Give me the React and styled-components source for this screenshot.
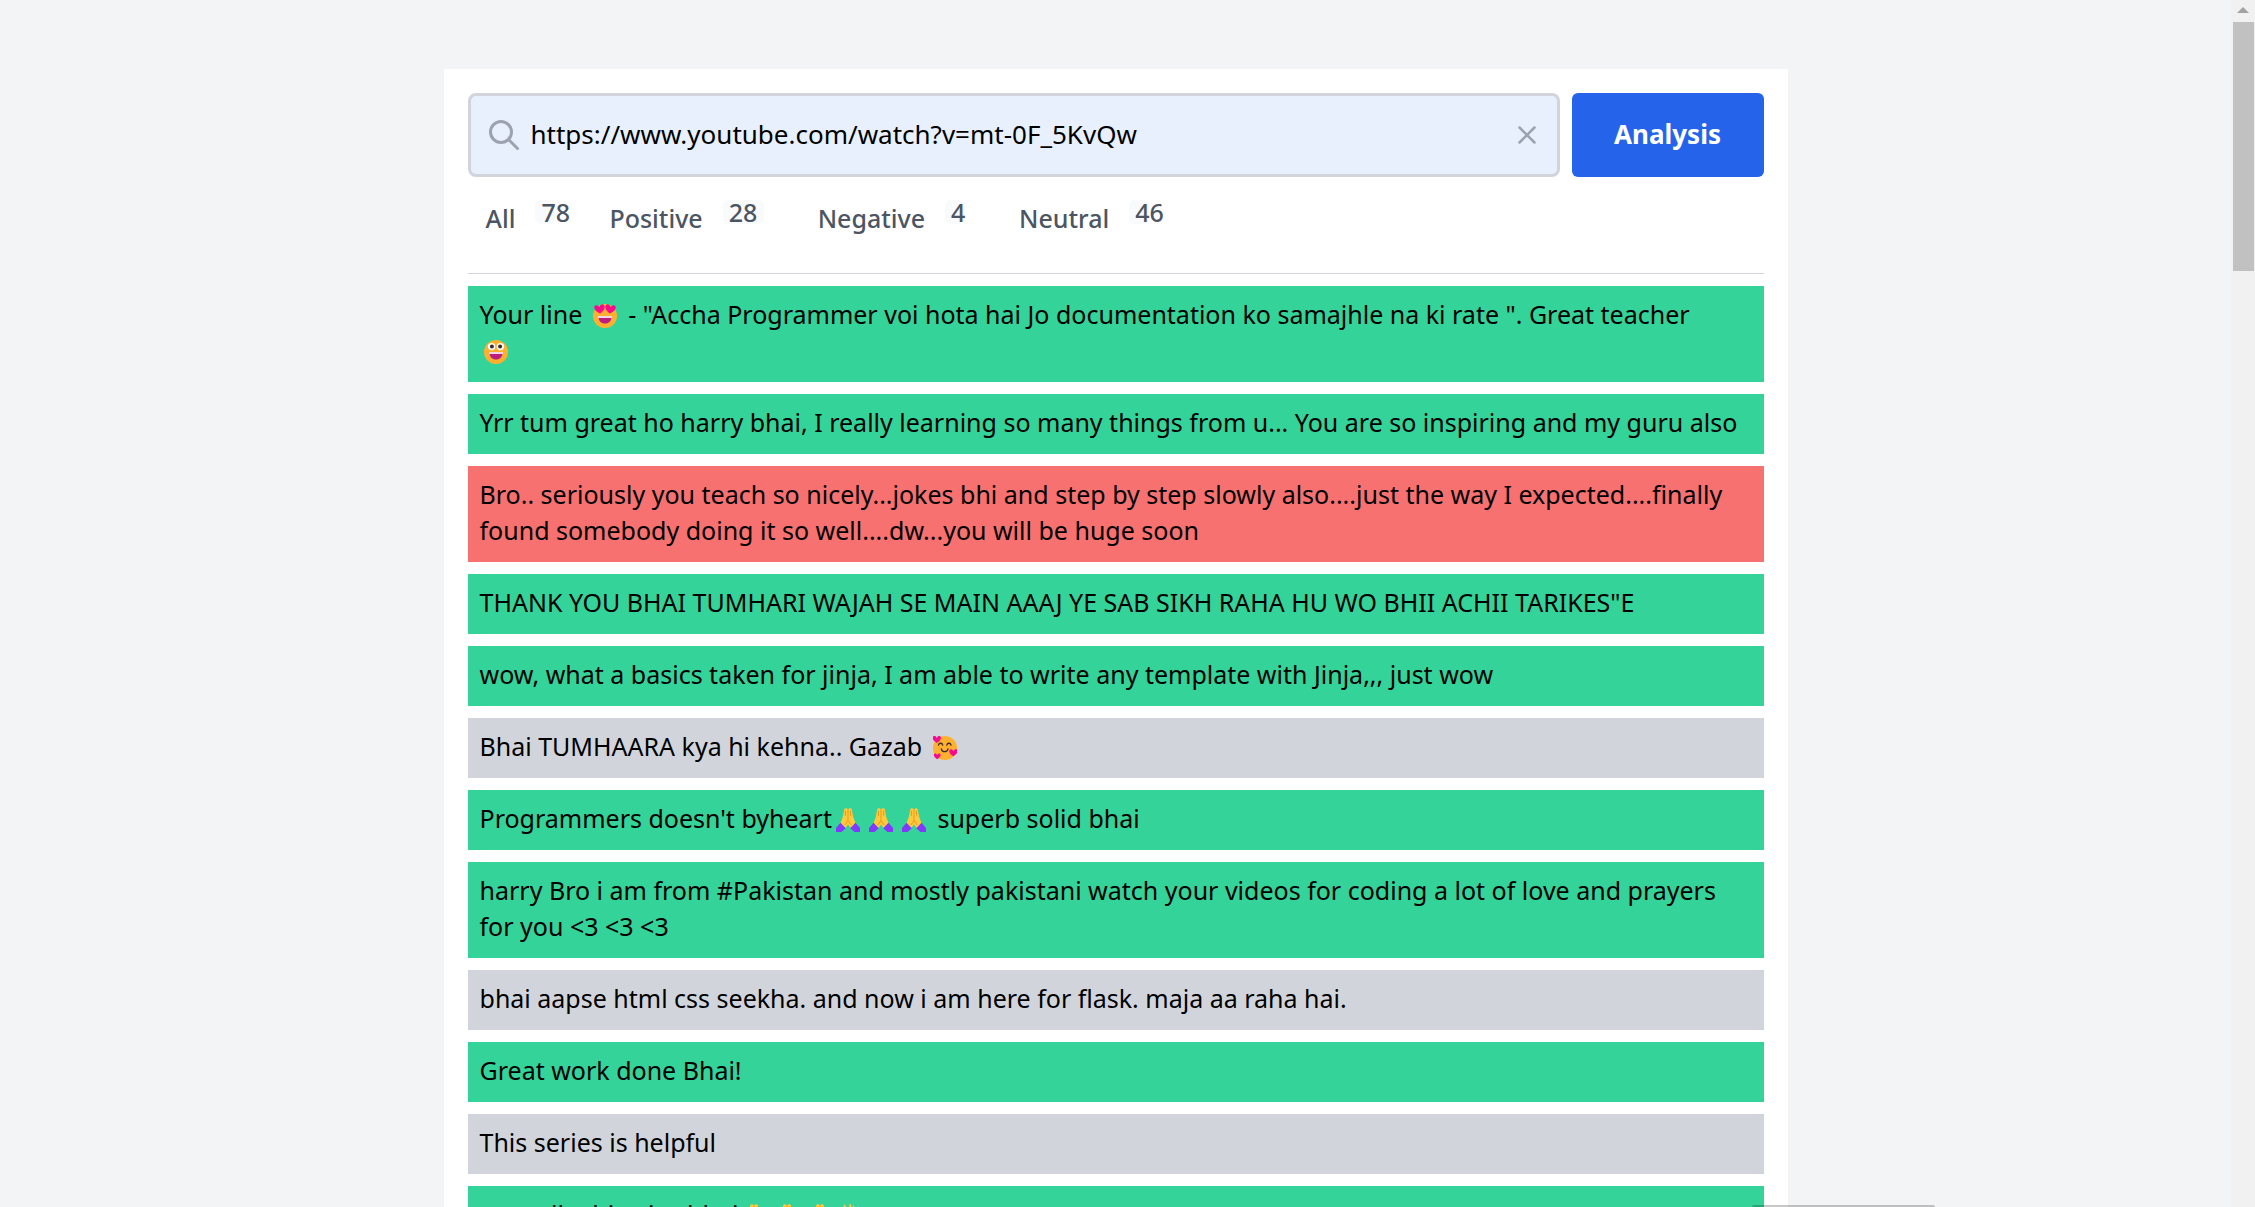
import React, { useState } from "react";
import styled, { createGlobalStyle } from "styled-components";

const GlobalStyle = createGlobalStyle`
  *, *::before, *::after { box-sizing: border-box; }
  body {
    margin: 0;
    background: #f3f4f6;
    color: #000;
    font-family: "Noto Sans", "Open Sans", sans-serif;
  }
`;

const Window = styled.div`
  display: flex;
  height: 100vh;
  overflow: hidden;
`;

const Page = styled.main`
  flex: 1;
  min-width: 0;
  height: 100%;
  padding-top: 69px;
  overflow: hidden;
`;

const Panel = styled.section`
  width: 100%;
  max-width: 1344px;
  margin: 0 auto;
  padding: 24px;
  background: #fff;
`;

const SearchForm = styled.form`
  display: flex;
  gap: 12px;
  height: 84px;
`;

const SearchField = styled.div`
  display: flex;
  flex: 1;
  align-items: center;
  min-width: 0;
  padding: 0 15px;
  border: 3px solid #d1d5db;
  border-radius: 8px;
  background: #e8f0fe;
  color: #9ca3af;
`;

const UrlInput = styled.input`
  flex: 1;
  min-width: 0;
  padding: 0 9px 2px;
  border: 0;
  outline: 0;
  background: transparent;
  color: #000;
  font-family: inherit;
  font-size: 26px;
  line-height: 36px;
`;

const ClearButton = styled.button`
  display: flex;
  padding: 0;
  border: 0;
  background: transparent;
  color: inherit;
  cursor: pointer;
`;

const SubmitButton = styled.button`
  width: 192px;
  padding: 0 0 2px;
  border: 0;
  border-radius: 6px;
  background: #2563eb;
  color: #fff;
  font-family: inherit;
  font-size: 26px;
  font-weight: 700;
  line-height: 36px;
  cursor: pointer;
`;

const Filters = styled.nav`
  display: flex;
  gap: 18px;
  padding: 23px 0 37px;
  border-bottom: 1px solid #d1d5db;
`;

const FilterLink = styled.a`
  display: flex;
  align-items: flex-start;
  gap: 20px;
  padding: 0 18px;
  color: #4b5563;
  font-size: 25px;
  font-weight: 500;
  line-height: 36px;
  text-decoration: none;
`;

const Count = styled.span`
  width: ${(p) => (p.$wide ? 41 : 20)}px;
  padding-left: 6px;
  border-radius: 6px;
  background: #f9fafb;
  line-height: 24px;
  white-space: nowrap;
`;

const CommentList = styled.ul`
  display: flex;
  flex-direction: column;
  gap: 12px;
  margin: 0;
  padding: 12px 0 0;
  list-style: none;
`;

const tones = { positive: "#34d399", negative: "#f87171", neutral: "#d1d5db" };

const Comment = styled.li`
  padding: 10px 12px 14px;
  background: ${(p) => tones[p.$tone]};
  font-size: 25px;
  line-height: 36px;
`;

const EmojiArt = styled.svg`
  width: 24px;
  height: 24px;
  margin: 0 5px 0 4px;
  vertical-align: -4px;
`;

const ScrollTrack = styled.div`
  display: flex;
  flex-direction: column;
  align-items: center;
  flex: 0 0 24px;
  background: #f1f1f1;
`;

const ScrollArrow = styled.svg`
  flex: none;
  width: 12px;
  height: 22px;
`;

const ScrollThumb = styled.div`
  width: 21px;
  height: 249px;
  background: #c1c1c1;
`;

const BottomTip = styled.div`
  position: fixed;
  right: 320px;
  bottom: 0;
  width: 183px;
  height: 2px;
  border-radius: 4px 4px 0 0;
  background: rgba(0, 0, 0, 0.22);
`;

const heart = "M0 3.4C-1.2-.4-5.6.2-5.2 3.6-4.9 6.5-2 8.4 0 9.6 2 8.4 4.9 6.5 5.2 3.6 5.6.2 1.2-.4 0 3.4Z";

const Grin = () => (
  <>
    <path d="M5.5 12.5h13c0 4.5-2.7 7-6.5 7s-6.5-2.5-6.5-7Z" fill="#bb1d80" />
    <path d="M5 12h14v2H5z" fill="#f4d5e6" />
  </>
);

const drawings = {
  hearteyes: (
    <>
      <circle cx="12" cy="12" r="12" fill="#ffb02e" />
      <path d={heart} transform="translate(6 0) rotate(-8)" fill="#f70a8d" />
      <path d={heart} transform="translate(18 0) rotate(8)" fill="#f70a8d" />
      <Grin />
    </>
  ),
  grinning: (
    <>
      <circle cx="12" cy="12" r="12" fill="#ffb02e" />
      <circle cx="7.6" cy="6.6" r="3.7" fill="#fff" />
      <circle cx="16.4" cy="6.6" r="3.7" fill="#fff" />
      <circle cx="7.9" cy="6.6" r="2" fill="#402a32" />
      <circle cx="16.1" cy="6.6" r="2" fill="#402a32" />
      <Grin />
    </>
  ),
  adoring: (
    <>
      <circle cx="12" cy="12" r="12" fill="#ffb02e" />
      <g fill="none" stroke="#402a32" strokeWidth="1.3" strokeLinecap="round">
        <path d="M5.5 9.2c.5-2.6 3.7-2.6 4.2 0M13.8 9.2c.5-2.6 3.7-2.6 4.2 0M8.3 12.8c.6 3.8 6 3.8 6.7 0" />
      </g>
      <path d={heart} transform="translate(3.8 -.8) scale(.8)" fill="#f70a8d" />
      <path d={heart} transform="translate(20.4 12.5) scale(.8)" fill="#f70a8d" />
      <path d={heart} transform="translate(4.2 17) scale(.65)" fill="#f70a8d" />
    </>
  ),
  pray: (
    <>
      <path d="M11.8 1.2C11 .1 8.8 0 8.2 1.5L6.8 9 4.4 15.2 9 20.6l3-4 3 4 4.6-5.4L17.2 9l-1.4-7.5C15.2 0 13 .1 12.2 1.2Z" fill="#ffc83d" />
      <path d="M9.4 2.6v5.2M12 1.5v11M14.6 2.6v5.2M12 12.5 8.8 17M12 12.5l3.2 4.5" stroke="#e69b1c" strokeWidth="1" fill="none" />
      <path d="M4.5 14.8 0 20v4h5.5L9.8 20.2ZM19.5 14.8 24 20v4h-5.5l-4.3-3.8Z" fill="#8238ff" />
    </>
  ),
  clap: (
    <>
      <path d="M3 1l3 4M9 0l1 4" stroke="#ffc83d" strokeWidth="1.5" />
      <path d="M5 11 8 2l3 4 1-5 3 5 2-4 2 8 2 6c0 5-4 8-9 8s-9-6-7-13Z" fill="#ffc83d" />
    </>
  ),
};

const Emoji = ({ name, label }) => (
  <EmojiArt viewBox="0 0 24 24" role="img" aria-label={label}>
    {drawings[name]}
  </EmojiArt>
);

const Pray = () => <Emoji name="pray" label="folded hands" />;

const filters = [
  { label: "All", count: 78 },
  { label: "Positive", count: 28, wide: true },
  { label: "Negative", count: 4 },
  { label: "Neutral", count: 46 },
];

const comments = [
  {
    tone: "positive",
    body: (
      <>
        Your line <Emoji name="hearteyes" label="heart eyes" /> - "Accha Programmer voi hota hai Jo documentation
        ko samajhle na ki rate ". Great teacher
        <br />
        <Emoji name="grinning" label="grinning face" />
      </>
    ),
  },
  {
    tone: "positive",
    body: "Yrr tum great ho harry bhai, I really learning so many things from u... You are so inspiring and my guru also",
  },
  {
    tone: "negative",
    body: "Bro.. seriously you teach so nicely...jokes bhi and step by step slowly also....just the way I expected....finally found somebody doing it so well....dw...you will be huge soon",
  },
  {
    tone: "positive",
    body: 'THANK YOU BHAI TUMHARI WAJAH SE MAIN AAAJ YE SAB SIKH RAHA HU WO BHII ACHII TARIKES"E',
  },
  {
    tone: "positive",
    body: "wow, what a basics taken for jinja, I am able to write any template with Jinja,,, just wow",
  },
  {
    tone: "neutral",
    body: (
      <>
        Bhai TUMHAARA kya hi kehna.. Gazab <Emoji name="adoring" label="smiling face with hearts" />
      </>
    ),
  },
  {
    tone: "positive",
    body: (
      <>
        Programmers doesn't byheart
        <Pray />
        <Pray />
        <Pray /> superb solid bhai
      </>
    ),
  },
  {
    tone: "positive",
    body: "harry Bro i am from #Pakistan and mostly pakistani watch your videos for coding a lot of love and prayers for you <3 <3 <3",
  },
  { tone: "neutral", body: "bhai aapse html css seekha. and now i am here for flask. maja aa raha hai." },
  { tone: "positive", body: "Great work done Bhai!" },
  { tone: "neutral", body: "This series is helpful" },
  {
    tone: "positive",
    body: (
      <>
        so really this nice bhai
        <Pray />
        <Pray />
        <Pray />
        <Emoji name="clap" label="clapping hands" />
      </>
    ),
  },
];

export default function App() {
  const [url, setUrl] = useState("https://www.youtube.com/watch?v=mt-0F_5KvQw");

  return (
    <Window>
      <GlobalStyle />
      <Page>
        <Panel>
          <SearchForm onSubmit={(e) => e.preventDefault()}>
            <SearchField>
              <svg width="36" height="36" viewBox="0 0 24 24" fill="none" stroke="currentColor" strokeWidth="2" strokeLinecap="round" aria-hidden="true">
                <path d="M21 21l-6-6m2-5a7 7 0 11-14 0 7 7 0 0114 0z" />
              </svg>
              <UrlInput type="text" aria-label="Video URL" value={url} onChange={(e) => setUrl(e.target.value)} />
              <ClearButton type="button" aria-label="Clear" onClick={() => setUrl("")}>
                <svg width="30" height="30" viewBox="0 0 24 24" fill="none" stroke="currentColor" strokeWidth="2" strokeLinecap="round" aria-hidden="true">
                  <path d="M6 18L18 6M6 6l12 12" />
                </svg>
              </ClearButton>
            </SearchField>
            <SubmitButton type="submit">Analysis</SubmitButton>
          </SearchForm>
          <Filters aria-label="Sentiment">
            {filters.map((f) => (
              <FilterLink key={f.label} href={`#${f.label.toLowerCase()}`}>
                {f.label}
                <Count $wide={f.wide}>{f.count}</Count>
              </FilterLink>
            ))}
          </Filters>
          <CommentList>
            {comments.map((c, i) => (
              <Comment key={i} $tone={c.tone}>
                {c.body}
              </Comment>
            ))}
          </CommentList>
        </Panel>
      </Page>
      <ScrollTrack aria-hidden="true">
        <ScrollArrow viewBox="0 0 12 22">
          <path d="M0 13 6 7l6 6Z" fill="#a3a3a3" />
        </ScrollArrow>
        <ScrollThumb />
      </ScrollTrack>
      <BottomTip />
    </Window>
  );
}
